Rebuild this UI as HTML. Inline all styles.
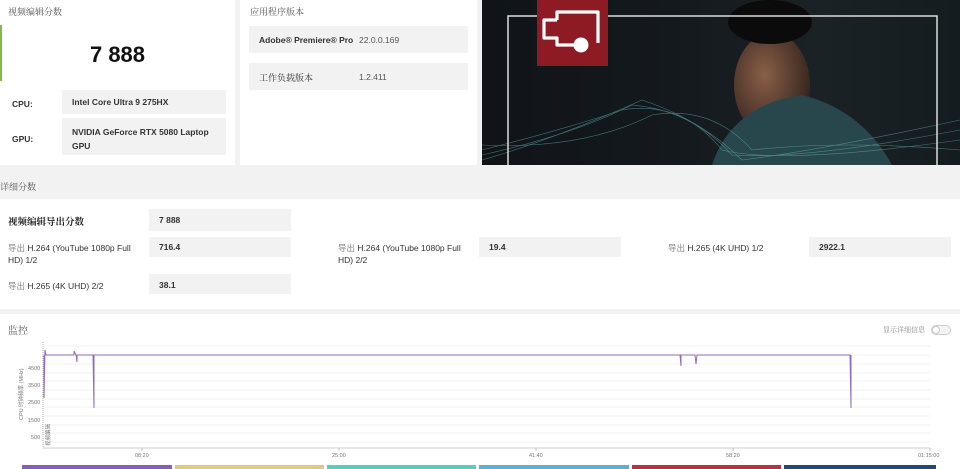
<!DOCTYPE html>
<html><head><meta charset="utf-8"><style>
*{margin:0;padding:0;box-sizing:border-box}
body{width:960px;height:469px;overflow:hidden;background:#f2f2f2;font-family:"Liberation Sans","Noto Sans CJK SC",sans-serif;color:#222;position:relative}
.a{position:absolute}
.card{position:absolute;background:#fff}
.g{position:absolute;background:#f2f2f2}
.t{font-size:9px;color:#555;font-family:"Noto Serif CJK SC","Liberation Sans",serif}
.b{font-size:8.5px;font-weight:bold;color:#333}
.n{font-size:8.5px;color:#333}
</style></head><body>
<div class="card" style="left:0;top:0;width:235px;height:165px"></div>
<div class="a" style="left:0;top:25px;width:2px;height:56px;background:#7dbb4a"></div>
<div class="a t" style="left:8px;top:5px">视频编辑分数</div>
<div class="a" style="left:0;top:42px;width:235px;text-align:center;font-size:22px;font-weight:bold;color:#111">7 888</div>
<div class="g" style="left:62px;top:90px;width:164px;height:24px"></div>
<div class="g" style="left:62px;top:118px;width:164px;height:37px"></div>
<div class="a b" style="left:12px;top:99px">CPU:</div>
<div class="a b" style="left:12px;top:134px">GPU:</div>
<div class="a b" style="left:72px;top:97px">Intel Core Ultra 9 275HX</div>
<div class="a b" style="left:72px;top:125px;line-height:14px">NVIDIA GeForce RTX 5080 Laptop<br>GPU</div>

<div class="card" style="left:240px;top:0;width:237px;height:165px"></div>
<div class="a t" style="left:250px;top:5px">应用程序版本</div>
<div class="g" style="left:249px;top:26px;width:219px;height:27px"></div>
<div class="g" style="left:249px;top:63px;width:219px;height:27px"></div>
<div class="a b" style="left:259px;top:35px;font-size:8.5px">Adobe® Premiere® Pro</div>
<div class="a n" style="left:359px;top:35px;color:#555">22.0.0.169</div>
<div class="a t" style="left:259px;top:71px;color:#333">工作负载版本</div>
<div class="a n" style="left:359px;top:72px;color:#555">1.2.411</div>

<div class="a" style="left:482px;top:0;width:478px;height:165px;background:linear-gradient(90deg,#101418 0%,#14191d 40%,#1a2226 70%,#151c20 100%);overflow:hidden">
<svg width="478" height="165" style="position:absolute;left:0;top:0">
<defs><radialGradient id="f" cx=".4" cy=".4" r=".6"><stop offset="0" stop-color="#8a5f48"/><stop offset="1" stop-color="#3a2820"/></radialGradient></defs>
<ellipse cx="290" cy="85" rx="38" ry="52" fill="url(#f)"/>
<ellipse cx="288" cy="22" rx="42" ry="22" fill="#0b0b0b"/>
<path d="M230 165 Q250 105 320 95 Q380 110 410 165Z" fill="#28474c"/>
<g fill="none" stroke="#5fb6b4" stroke-width=".6" opacity=".6">
<path d="M0 150 Q80 130 140 110 Q200 100 240 150 Q300 165 478 140"/>
<path d="M0 155 Q90 135 150 105 Q210 110 250 155 Q320 160 478 130"/>
<path d="M0 160 Q70 140 160 100 Q220 120 260 160 Q340 150 478 120"/>
<path d="M0 145 Q100 150 170 115 Q230 105 270 150 Q360 140 478 150"/>
</g>
<rect x="26" y="16" width="429" height="150" fill="none" stroke="#ddd" stroke-width="1.5"/>
<rect x="55" y="0" width="71" height="66" fill="#8e1b24"/>
<path d="M75 20 V12 H116 V43 M75 20 H62 V38 H75 V45 H92" fill="none" stroke="#fff" stroke-width="3.2" stroke-linejoin="round"/>
<circle cx="99" cy="45" r="7.5" fill="#fff"/>
</svg></div>

<div class="a t" style="left:0;top:180px">详细分数</div>
<div class="card" style="left:0;top:199px;width:960px;height:110px"></div>
<div class="a" style="left:8px;top:214px;font-size:9.5px;font-weight:bold;font-family:'Noto Serif CJK SC',serif;color:#222">视频编辑导出分数</div>
<div class="g" style="left:149px;top:209px;width:142px;height:22px"></div>
<div class="a b" style="left:159px;top:215px">7 888</div>
<div class="g" style="left:149px;top:237px;width:142px;height:20px"></div>
<div class="a b" style="left:159px;top:242px">716.4</div>
<div class="a n" style="left:8px;top:242px;line-height:12px"><span style="color:#888">导出</span> H.264 (YouTube 1080p Full<br>HD) 1/2</div>
<div class="g" style="left:149px;top:274px;width:142px;height:20px"></div>
<div class="a b" style="left:159px;top:280px">38.1</div>
<div class="a n" style="left:8px;top:280px"><span style="color:#888">导出</span> H.265 (4K UHD) 2/2</div>
<div class="a n" style="left:338px;top:242px;line-height:12px"><span style="color:#888">导出</span> H.264 (YouTube 1080p Full<br>HD) 2/2</div>
<div class="g" style="left:479px;top:237px;width:142px;height:20px"></div>
<div class="a b" style="left:489px;top:242px">19.4</div>
<div class="a n" style="left:668px;top:242px"><span style="color:#888">导出</span> H.265 (4K UHD) 1/2</div>
<div class="g" style="left:809px;top:237px;width:142px;height:20px"></div>
<div class="a b" style="left:819px;top:242px">2922.1</div>

<div class="card" style="left:0;top:314px;width:960px;height:155px"></div>
<div class="a t" style="left:8px;top:322px;font-size:10px">监控</div>
<div class="a t" style="left:883px;top:325px;font-size:7px;color:#888">显示详细信息</div>
<div class="a" style="left:931px;top:325px;width:20px;height:10px;border:1px solid #ccc;border-radius:5px;background:#f4f4f4"><div style="width:8px;height:8px;border-radius:50%;background:#fff;border:1px solid #ccc"></div></div>
<svg class="a" style="left:0;top:340px" width="960" height="129">
<g stroke="#eee" stroke-width=".7">
<line x1="44" x2="930" y1="6" y2="6"/><line x1="44" x2="930" y1="15" y2="15"/><line x1="44" x2="930" y1="24" y2="24"/><line x1="44" x2="930" y1="33" y2="33"/><line x1="44" x2="930" y1="41" y2="41"/><line x1="44" x2="930" y1="50" y2="50"/><line x1="44" x2="930" y1="59" y2="59"/><line x1="44" x2="930" y1="67" y2="67"/><line x1="44" x2="930" y1="76" y2="76"/><line x1="44" x2="930" y1="85" y2="85"/><line x1="44" x2="930" y1="93" y2="93"/><line x1="44" x2="930" y1="102" y2="102"/>
</g>
<line x1="43" y1="2" x2="43" y2="108" stroke="#999" stroke-width=".8" stroke-dasharray="1 1"/>
<line x1="43" y1="108" x2="930" y2="108" stroke="#ccc"/>
<g stroke="#999" stroke-width=".6"><line x1="142" x2="142" y1="108" y2="111"/><line x1="339" x2="339" y1="108" y2="111"/><line x1="536" x2="536" y1="108" y2="111"/><line x1="733" x2="733" y1="108" y2="111"/><line x1="930" x2="930" y1="108" y2="111"/></g>
<g font-size="5.5" fill="#777" font-family="Liberation Sans">
<text x="28" y="30">4500</text><text x="28" y="47">3500</text><text x="28" y="64">2500</text><text x="28" y="82">1500</text><text x="31" y="99">500</text>
<text x="135" y="117">08:20</text><text x="332" y="117">25:00</text><text x="529" y="117">41:40</text><text x="726" y="117">58:20</text><text x="918" y="117">01:15:00</text>
<text transform="translate(23,80) rotate(-90)" font-family="Liberation Sans,Noto Sans CJK SC">CPU 时钟频率 (MHz)</text>
<text transform="translate(50,106) rotate(-90)" font-family="Noto Sans CJK SC">视频编辑</text>
</g>
<g stroke="#8e6bbf" stroke-width="1" fill="none">
<polyline points="44,15 44,58 45,10 46,15 74,15 74,11 76,15 77,22 77,15 93,15 94,68 94,15 680,15 681,26 681,15 695,15 696,24 697,15 850,15 851,68 851,15"/>
</g>
<g stroke-width="4"><line x1="22" x2="172" y1="127" y2="127" stroke="#8a5cc0"/><line x1="175" x2="324" y1="127" y2="127" stroke="#e8c77a"/><line x1="327" x2="476" y1="127" y2="127" stroke="#4fd1c0"/><line x1="479" x2="629" y1="127" y2="127" stroke="#5bb0d8"/><line x1="632" x2="781" y1="127" y2="127" stroke="#c0303a"/><line x1="784" x2="936" y1="127" y2="127" stroke="#1b4a78"/></g>
</svg>
</body></html>
